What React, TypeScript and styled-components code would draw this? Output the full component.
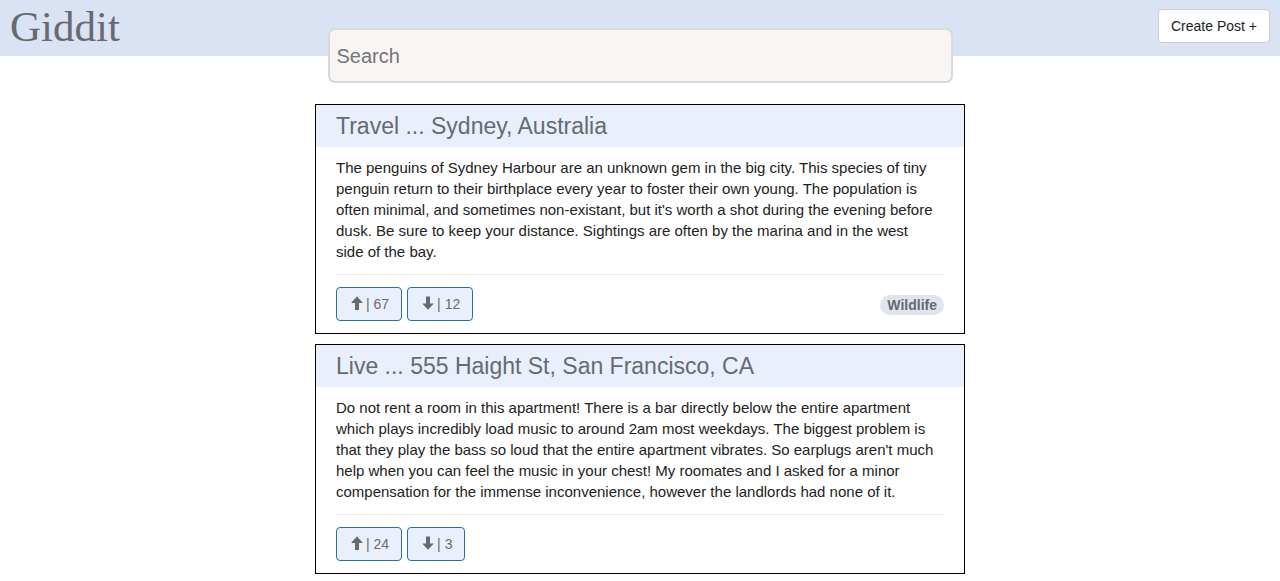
import React from "react";
import styled, { createGlobalStyle } from "styled-components";

const GlobalStyle = createGlobalStyle`
  *, *::before, *::after { box-sizing: border-box; }
  body {
    margin: 0;
    background: #fff;
    color: #222;
    font-family: "Helvetica Neue", "Liberation Sans", Arial, sans-serif;
    font-size: 15px;
    line-height: 21px;
  }
`;

const Header = styled.header`
  display: flex;
  justify-content: space-between;
  align-items: flex-start;
  height: 56px;
  padding: 0 10px;
  background: #dae3f4;
`;

const Logo = styled.a`
  color: #666a73;
  font-family: "Liberation Serif", serif;
  font-size: 43px;
  line-height: 54px;
  text-decoration: none;
`;

const CreateButton = styled.button`
  height: 34px;
  margin-top: 9px;
  padding: 0 12px;
  border: 1px solid #ccc;
  border-radius: 4px;
  background: #fff;
  color: #222;
  font: inherit;
  font-size: 14px;
  cursor: pointer;
`;

const SearchForm = styled.form`
  position: relative;
  width: 100%;
  max-width: 625px;
  margin: -28px auto 0;
`;

const SearchInput = styled.input`
  display: block;
  width: 100%;
  height: 55px;
  padding: 1px 7px 0;
  border: 2px solid #d9d9d9;
  border-radius: 7px;
  background: #f8f5f4;
  color: #222;
  font: inherit;
  font-size: 20px;

  &::placeholder {
    color: #757575;
    opacity: 1;
  }
`;

const Feed = styled.main`
  display: flex;
  flex-direction: column;
  gap: 10px;
  width: 100%;
  max-width: 650px;
  margin: 21px auto 7px;
`;

const Card = styled.article`
  border: 1px solid #000;
  background: #fff;
`;

const CardTitle = styled.h2`
  margin: 0;
  padding: 0 20px;
  background: #e9f0fb;
  color: #666a73;
  font-size: 23px;
  font-weight: 400;
  line-height: 42px;
`;

const CardBody = styled.div`
  padding: 10px 20px 12px;
`;

const CardText = styled.p`
  margin: 0;
  padding-right: 8px;
`;

const CardFooter = styled.footer`
  display: flex;
  justify-content: space-between;
  align-items: center;
  margin-top: 12px;
  padding-top: 12px;
  border-top: 1px solid #eee;
`;

const Votes = styled.div`
  display: flex;
  gap: 5px;
`;

const VoteButton = styled.button`
  display: flex;
  align-items: center;
  gap: 3px;
  height: 34px;
  padding: 0 12px;
  border: 1px solid #2a70a5;
  border-radius: 4px;
  background: #e9f0fb;
  color: #666a73;
  font: inherit;
  font-size: 14px;
  cursor: pointer;
`;

const Tag = styled.a`
  margin-top: 2px;
  padding: 0 7px;
  border-radius: 10px;
  background: #dfe4ee;
  color: #666a73;
  font-size: 14px;
  font-weight: 700;
  line-height: 20px;
  text-decoration: none;
`;

const Arrow = ({ down = false }: { down?: boolean }) => (
  <svg width="14" height="16" viewBox="0 0 14 16" fill="currentColor" aria-hidden="true">
    <path
      d={
        down
          ? "M6 .5h4v7h3.2q.6 0 .2.5L8 13.7 2.6 8q-.4-.5.2-.5H6z"
          : "M8 .6l5.4 5.7q.4.6-.2.6H10V14H6V6.9H2.8q-.6 0-.2-.6z"
      }
    />
  </svg>
);

interface Post {
  title: string;
  text: string;
  up: number;
  down: number;
  tag?: string;
}

const posts: Post[] = [
  {
    title: "Travel ... Sydney, Australia",
    text: "The penguins of Sydney Harbour are an unknown gem in the big city. This species of tiny penguin return to their birthplace every year to foster their own young. The population is often minimal, and sometimes non-existant, but it's worth a shot during the evening before dusk. Be sure to keep your distance. Sightings are often by the marina and in the west side of the bay.",
    up: 67,
    down: 12,
    tag: "Wildlife",
  },
  {
    title: "Live ... 555 Haight St, San Francisco, CA",
    text: "Do not rent a room in this apartment! There is a bar directly below the entire apartment which plays incredibly load music to around 2am most weekdays. The biggest problem is that they play the bass so loud that the entire apartment vibrates. So earplugs aren't much help when you can feel the music in your chest! My roomates and I asked for a minor compensation for the immense inconvenience, however the landlords had none of it.",
    up: 24,
    down: 3,
  },
];

export default function App() {
  return (
    <>
      <GlobalStyle />
      <Header>
        <Logo href="#">Giddit</Logo>
        <CreateButton type="button">Create Post +</CreateButton>
      </Header>
      <SearchForm role="search">
        <SearchInput type="text" placeholder="Search" aria-label="Search" />
      </SearchForm>
      <Feed>
        {posts.map((post) => (
          <Card key={post.title}>
            <CardTitle>{post.title}</CardTitle>
            <CardBody>
              <CardText>{post.text}</CardText>
              <CardFooter>
                <Votes>
                  <VoteButton type="button" aria-label={`Upvote, ${post.up}`}>
                    <Arrow />
                    <span>| {post.up}</span>
                  </VoteButton>
                  <VoteButton type="button" aria-label={`Downvote, ${post.down}`}>
                    <Arrow down />
                    <span>| {post.down}</span>
                  </VoteButton>
                </Votes>
                {post.tag && <Tag href="#">{post.tag}</Tag>}
              </CardFooter>
            </CardBody>
          </Card>
        ))}
      </Feed>
    </>
  );
}
